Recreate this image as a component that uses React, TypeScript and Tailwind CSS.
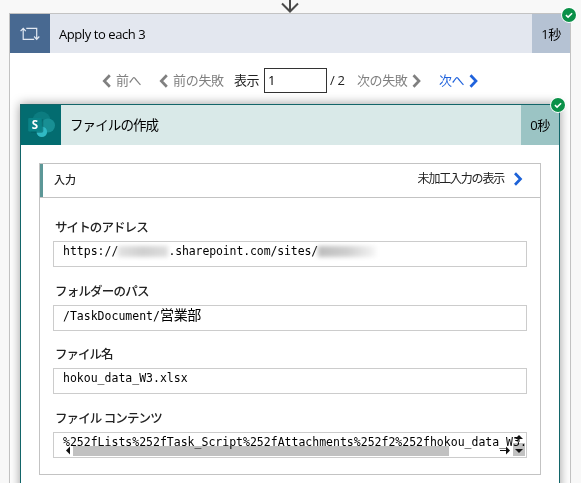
import type { ReactNode } from "react";

const ui = "font-['Open_Sans','Noto_Sans_CJK_JP',sans-serif]";
const mono = "font-['DejaVu_Sans_Mono','Noto_Sans_CJK_JP',monospace]";

function Chevron({ dir, className, size = "h-[14px] w-[9px]" }: { dir: "left" | "right"; className?: string; size?: string }) {
  return (
    <svg viewBox="0 0 9 14" className={`${size} shrink-0 ${className ?? ""}`} fill="none" stroke="currentColor" strokeWidth="2.7">
      <path d={dir === "left" ? "M7.8 1.2 L2.3 7 L7.8 12.8" : "M1.5 1.2 L7 7 L1.5 12.8"} />
    </svg>
  );
}

function SuccessBadge({ className }: { className: string }) {
  return (
    <svg viewBox="0 0 16 16" className={`absolute h-4 w-4 ${className}`}>
      <circle cx="8" cy="8" r="7.9" fill="#fff" />
      <circle cx="8" cy="8" r="7" fill="#0a9048" />
      <path d="M4.9 8.1 L7.1 10.1 L11.1 6.2" fill="none" stroke="#fff" strokeWidth="1.5" />
    </svg>
  );
}

function LoopIcon() {
  return (
    <svg viewBox="0 0 20 14" className="h-[14px] w-5" fill="none" stroke="#e2e9f3" strokeWidth="1.2">
      <path d="M3.2 1.3 V12.3 H14.2 M0.6 4.2 L3.2 1.3 L5.8 4.2" />
      <path d="M6.3 1.3 H16.7 V12.2 M14.1 9.5 L16.7 12.3 L19.3 9.5" />
    </svg>
  );
}

function SharePointIcon() {
  return (
    <svg viewBox="0 0 40 40" className="h-10 w-10">
      <circle cx="20.5" cy="15.5" r="9" fill="#0c7c80" />
      <circle cx="27" cy="20.5" r="7" fill="#188f94" />
      <circle cx="20.8" cy="26.8" r="5.3" fill="#30b9c4" />
      <path d="M10 14 H21 Q22.3 14 22.3 15 V26 Q22.3 27.8 20.5 27.8 H10 Z" fill="#025b60" opacity="0.55" />
      <rect x="7.2" y="13" width="13.6" height="13.6" rx="1" fill="#0a8387" />
      <text x="14" y="23.9" textAnchor="middle" fill="#fff" fontSize="11.5" fontWeight="700" fontFamily="Open Sans, sans-serif">S</text>
    </svg>
  );
}

function Field({ label, labelClass, children }: { label: string; labelClass: string; children: ReactNode }) {
  return (
    <div className="h-[63.67px]">
      <div className={`h-[25px] pt-px pl-0.5 text-[12.5px] leading-[22px] font-medium whitespace-nowrap text-[#222] ${labelClass}`}>{label}</div>
      <div className={`relative h-[26px] overflow-hidden border border-[#ccc] pl-[9px] text-[11.5px] leading-[18px] whitespace-nowrap text-black ${mono}`}>
        {children}
      </div>
    </div>
  );
}

export default function App() {
  return (
    <main className={`relative h-[483px] w-[581px] overflow-hidden bg-[#f8f8f8] pt-[13px] pl-[9px] ${ui}`}>
      <svg viewBox="0 0 20 14" className="absolute top-0 left-[280px] h-[14px] w-5" fill="none" stroke="#4a4a4a" strokeWidth="2">
        <path d="M10 0 V11.5 M2 3.5 L10 11.5 L18 3.5" />
      </svg>

      <section className="relative h-[480px] w-[562px] border border-[#c3c3c3] bg-white">
        <header className="flex h-[39px] items-center bg-[#e3e7ef] text-black">
          <div className="flex h-full w-10 items-center justify-center bg-[#486991]"><LoopIcon /></div>
          <span className="ml-[9px] flex-1 pt-0.5 text-[13px] tracking-[-0.42px]">Apply to each 3</span>
          <span className="flex h-full w-[38px] items-center justify-center bg-[#b5c2d3] pt-0.5 text-[13px] tracking-[-0.5px]">1秒</span>
        </header>
        <SuccessBadge className="top-[-7px] right-[-7px]" />

        <nav className="flex h-[51px] items-center pt-[4px] pl-[92px] text-[13px] whitespace-nowrap text-[#808080]">
          <span className="flex w-[57px] items-center gap-[5px] tracking-[-0.4px]"><Chevron dir="left" />前へ</span>
          <span className="flex w-[75px] items-center gap-[5px] tracking-[-0.3px]"><Chevron dir="left" />前の失敗</span>
          <span className="w-[30px] tracking-[-0.4px] text-[#222]">表示</span>
          <span className="flex h-[25px] w-[63px] items-center border border-[#333] pt-px pl-[3px] text-black">1</span>
          <span className="w-[30px] pt-px pl-[3px] tracking-[-0.3px] text-[#222]">/ 2</span>
          <span className="flex w-[82px] items-center gap-[5px] tracking-[-0.4px]">次の失敗<Chevron dir="right" /></span>
          <span className="flex items-center gap-[5px] tracking-[-0.5px] text-[#1f62dc]">次へ<Chevron dir="right" /></span>
        </nav>

        <section className="relative ml-[10px] h-[400px] w-[540px] border border-[#126569] bg-white shadow-[0_0_10px_rgba(0,0,0,0.4)]">
          <header className="flex h-10 items-center bg-[#d9e9e8] text-black">
            <div className="h-10 w-10 bg-[#036c70]"><SharePointIcon /></div>
            <span className="ml-[9px] flex-1 text-[13.5px] tracking-[-0.9px]">ファイルの作成</span>
            <span className="flex h-full w-[38px] items-center justify-center bg-[#9bc4c4] pt-0.5 text-[13px] tracking-[-0.5px]">0秒</span>
          </header>
          <SuccessBadge className="top-[-8px] right-[-7px]" />

          <div className="mt-[18px] ml-[18px] h-[312px] w-[502px] border border-[#c3c3c3]">
            <div className="flex h-[34px] items-center border-b border-[#c3c3c3] text-[12px] text-[#222]">
              <div className="h-full w-[3px] bg-[#5c9797]" />
              <span className="ml-[11px] flex-1 text-[11px] font-medium">入力</span>
              <span className="pb-[3px] tracking-[-1.2px]">未加工入力の表示</span>
              <Chevron dir="right" className="mr-[17px] mb-[3px] ml-[9px] text-[#1d62d8]" size="h-[14px] w-[10px]" />
            </div>
            <div className="pt-[18px] pr-[13px] pl-[13px]">
              <Field label="サイトのアドレス" labelClass="tracking-[-0.9px]">
                https://<span className="inline-block h-[11px] w-[50px] bg-linear-to-r from-[#e2e2e2] via-[#cfcfcf] to-[#dedede] align-middle blur-[2px]" />
                <span className="tracking-[-0.12px]">.sharepoint.com/sites/</span>
                <span className="inline-block h-[11px] w-[58px] bg-linear-to-r from-[#bdbdbd] via-[#cecece] to-[#f6f6f6] align-middle blur-[2px]" />
              </Field>
              <Field label="フォルダーのパス" labelClass="tracking-[-0.8px]">/TaskDocument/<span className="text-[14px] tracking-[-0.3px]">営業部</span></Field>
              <Field label="ファイル名" labelClass="tracking-[-1px]">hokou_data_W3.xlsx</Field>
              <Field label="ファイル コンテンツ" labelClass="tracking-[-0.9px]">
                %252fLists%252fTask_Script%252fAttachments%252f2%252fhokou_data_W3.
                <div className="absolute top-[13px] left-[19px] h-[10px] w-[376px] bg-[#c1c1c1] mix-blend-multiply" />
                <div className="absolute top-[10px] left-[459px] h-[13px] w-[12px] bg-[#c1c1c1] mix-blend-multiply" />
                <svg viewBox="0 0 472 24" className="absolute top-0 left-0 h-6 w-[472px]" fill="#111">
                  <path d="M12 17.5 L16 13.5 V21.5 Z M456 17.5 L452 13.5 V21.5 Z M465 2 L461 6 H469 Z M465 20 L461 16 H469 Z" />
                  <path d="M446 17 H452 V18 H446 Z M464.5 5 H465.5 V9 H464.5 Z" />
                </svg>
              </Field>
            </div>
          </div>
        </section>
      </section>
    </main>
  );
}
